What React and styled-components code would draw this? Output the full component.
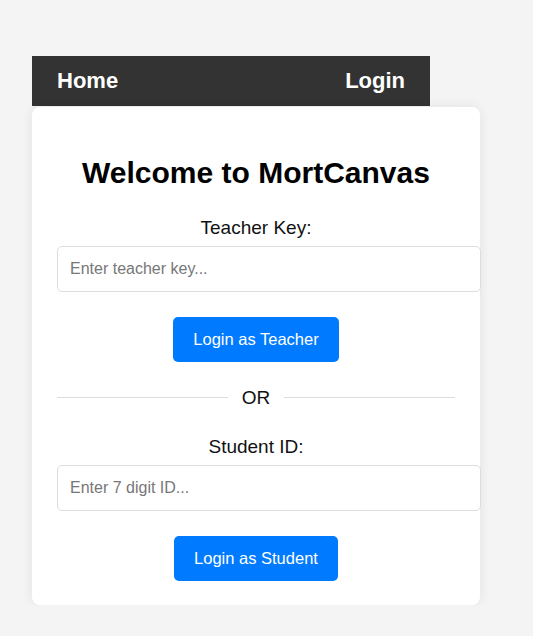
import React, { useState } from "react";
import styled, { createGlobalStyle } from "styled-components";

const GlobalStyle = createGlobalStyle`
  body {
    margin: 0;
    background: #f4f4f4;
    font-family: "Liberation Sans", Arial, sans-serif;
  }
`;

const Page = styled.div`
  padding: 56px 0 0 32px;
`;

const NavBar = styled.nav`
  width: 398px;
  height: 50px;
  box-sizing: border-box;
  padding: 0 25px;
  background: #333;
  display: flex;
  align-items: center;
  justify-content: space-between;
`;

const NavLink = styled.a`
  color: #fff;
  font-size: 22px;
  font-weight: bold;
  text-decoration: none;
  cursor: pointer;
`;

const Card = styled.div`
  width: 448px;
  box-sizing: border-box;
  margin-top: 1px;
  padding: 49px 25px 24px;
  background: #fff;
  border-radius: 8px;
  box-shadow: 0 0 12px rgba(0, 0, 0, 0.08);
  display: flex;
  flex-direction: column;
  align-items: center;
`;

const Title = styled.h2`
  margin: 0 0 27px;
  font-size: 30px;
  line-height: 34px;
  color: #000;
`;

const Label = styled.label`
  font-size: 19px;
  line-height: 21px;
  color: #111;
  margin-bottom: 8px;
`;

const Input = styled.input`
  align-self: flex-start;
  width: 398px;
  box-sizing: content-box;
  height: 20px;
  padding: 12px 12px;
  border: 1px solid #ddd;
  border-radius: 5px;
  font-family: inherit;
  font-size: 16px;
  color: #333;
  outline: none;

  &::placeholder {
    color: #777;
  }
`;

const Button = styled.button`
  margin-top: 25px;
  padding: 13px 20px;
  background: #007bff;
  color: #fff;
  border: none;
  border-radius: 5px;
  font-family: inherit;
  font-size: 16.5px;
  line-height: 19px;
  cursor: pointer;
`;

const Divider = styled.div`
  width: 100%;
  display: flex;
  align-items: center;
  margin: 25px 0 28px;
  font-size: 19px;
  line-height: 21px;
  color: #111;

  &::before,
  &::after {
    content: "";
    flex: 1;
    height: 1px;
    background: #ddd;
  }

  span {
    padding: 0 14px;
  }
`;

export default function App() {
  const [teacherKey, setTeacherKey] = useState("");
  const [studentId, setStudentId] = useState("");

  return (
    <>
      <GlobalStyle />
      <Page>
        <NavBar>
          <NavLink>Home</NavLink>
          <NavLink>Login</NavLink>
        </NavBar>
        <Card>
          <Title>Welcome to MortCanvas</Title>
          <Label htmlFor="teacher">Teacher Key:</Label>
          <Input
            id="teacher"
            type="text"
            placeholder="Enter teacher key..."
            value={teacherKey}
            onChange={(e) => setTeacherKey(e.target.value)}
          />
          <Button>Login as Teacher</Button>
          <Divider>
            <span>OR</span>
          </Divider>
          <Label htmlFor="student">Student ID:</Label>
          <Input
            id="student"
            type="text"
            placeholder="Enter 7 digit ID..."
            value={studentId}
            onChange={(e) => setStudentId(e.target.value)}
          />
          <Button>Login as Student</Button>
        </Card>
      </Page>
    </>
  );
}
